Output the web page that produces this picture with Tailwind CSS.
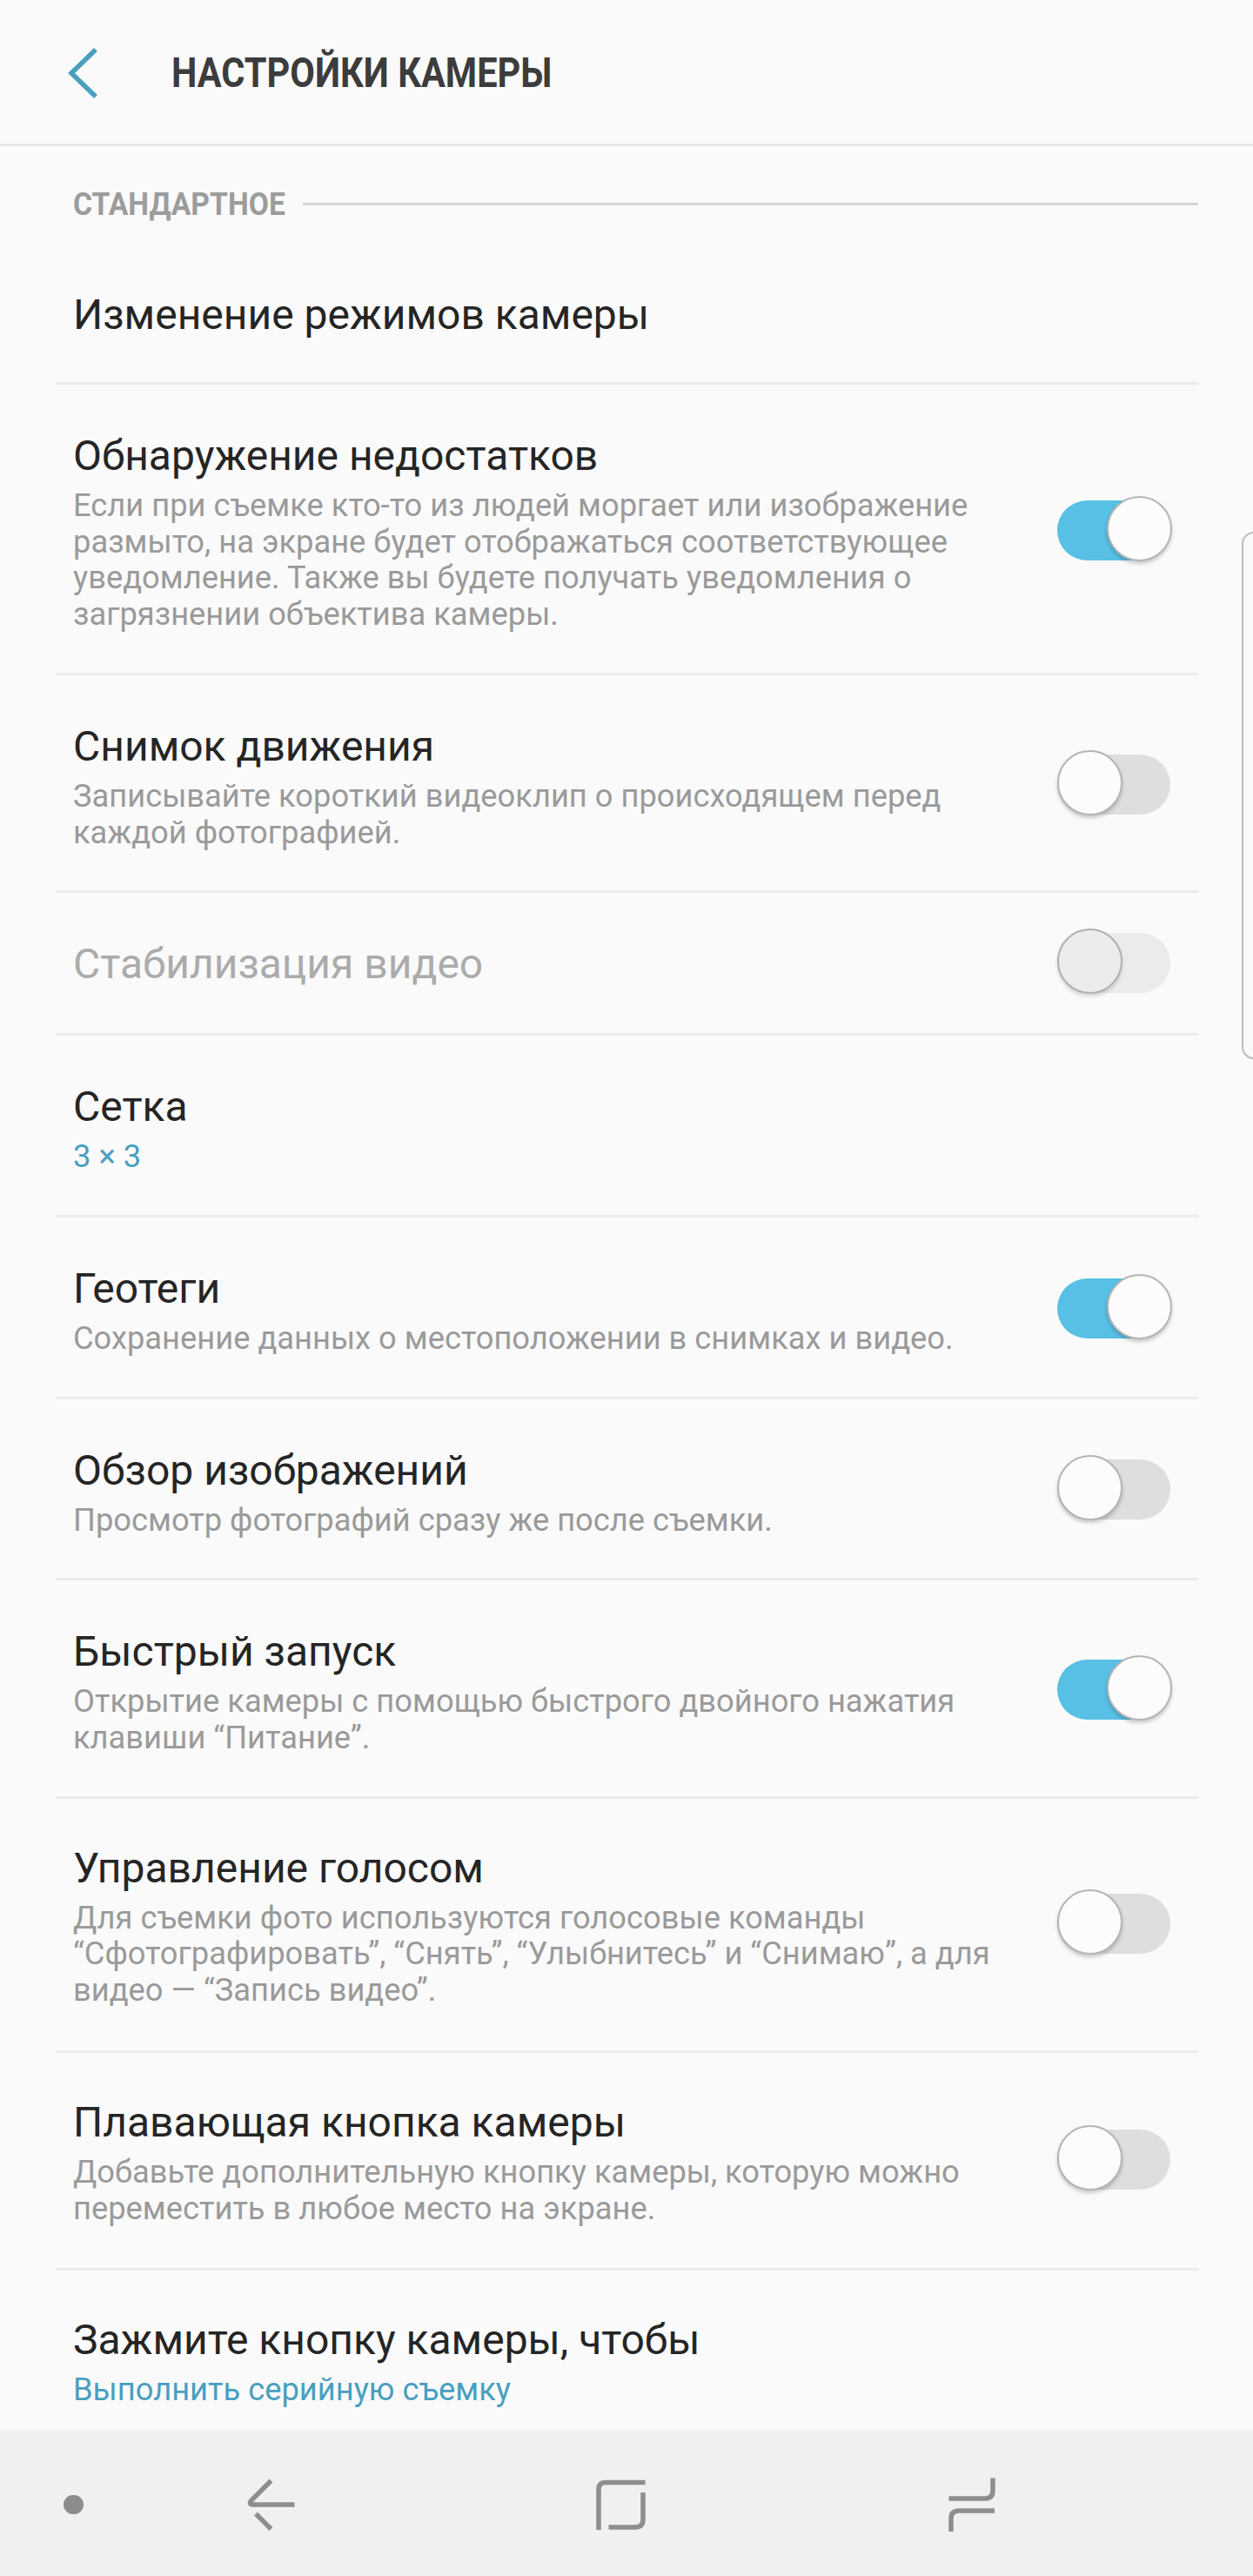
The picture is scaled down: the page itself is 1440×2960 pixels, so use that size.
<!DOCTYPE html>
<html lang="ru">

<head>
  <meta charset="UTF-8">
  <meta name="viewport" content="width=device-width, initial-scale=1.0">
  <script src="https://cdn.jsdelivr.net/npm/@tailwindcss/browser@4"></script>
  <title>Настройки камеры</title>
</head>

<body class="bg-[#fafafa] font-['Roboto',sans-serif]">
  <div class="relative flex h-[2960px] w-[1440px] flex-col overflow-hidden">
    <!-- header -->
    <header class="flex h-[168px] shrink-0 items-center border-b-[3px] border-[#e8e8e8] pt-[2px]">
      <svg class="ml-[72px] h-[64px] w-[48px]" viewBox="0 0 48 64" fill="none" stroke="#4a9fc0" stroke-width="5.5">
        <path d="M38 5 L10 32 L38 59" />
      </svg>
      <h1 class="ml-[77px] origin-left scale-x-[0.865] whitespace-nowrap text-[48px] font-bold leading-none text-[#3c3c3c]">НАСТРОЙКИ КАМЕРЫ</h1>
    </header>

    <!-- settings -->
    <main class="min-h-0 flex-1 overflow-hidden pl-[64px] pr-[63px]">
      <div class="flex h-[125px] items-center pl-[20px] pt-[8px]">
        <span class="w-[264px] shrink-0 origin-left scale-x-[0.91] text-[37px] font-bold leading-none text-[#9c9c9c]">СТАНДАРТНОЕ</span>
        <div class="h-[3px] flex-1 bg-[#d6d6d6]"></div>
      </div>

      <div class="flex h-[149px] items-center border-b-[3px] border-[#ececec] pb-[8px] pl-[20px]">
        <div class="text-[48px] leading-[60px] text-[#252525]">Изменение режимов камеры</div>
      </div>

      <div class="flex items-center border-b-[3px] border-[#ececec] pl-[20px] pr-[32px] pt-[52px] pb-[46px]">
        <div class="flex-1">
          <div class="text-[48px] leading-[60px] text-[#252525]">Обнаружение недостатков</div>
          <div class="mt-[6px] whitespace-nowrap text-[36.3px] leading-[41.7px] text-[#9a9a9a]">Если при съемке кто-то из людей моргает или изображение<br>размыто, на экране будет отображаться соответствующее<br>уведомление. Также вы будете получать уведомления о<br>загрязнении объектива камеры.</div>
        </div>
        <div class="relative mb-[2px] h-[69px] w-[130px] shrink-0 rounded-full bg-[#58bfe5]">
          <div class="absolute -right-[2px] -top-[5px] h-[75px] w-[75px] rounded-full border-2 border-[#b5b5b5] bg-[#fcfcfc] shadow-[0_3px_4px_rgba(0,0,0,0.2)]"></div>
        </div>
      </div>

      <div class="flex items-center border-b-[3px] border-[#ececec] pl-[20px] pr-[32px] pt-[52px] pb-[46px]">
        <div class="flex-1">
          <div class="text-[48px] leading-[60px] text-[#252525]">Снимок движения</div>
          <div class="mt-[6px] whitespace-nowrap text-[36.3px] leading-[41.7px] text-[#9a9a9a]">Записывайте короткий видеоклип о происходящем перед<br>каждой фотографией.</div>
        </div>
        <div class="relative mb-[3px] h-[69px] w-[130px] shrink-0 rounded-full bg-[#dedede]">
          <div class="absolute left-0 -top-[5px] h-[75px] w-[75px] rounded-full border-2 border-[#b5b5b5] bg-[#fcfcfc] shadow-[0_3px_4px_rgba(0,0,0,0.2)]"></div>
        </div>
      </div>

      <div class="flex h-[164px] items-center border-b-[3px] border-[#ececec] pl-[20px] pr-[32px]">
        <div class="flex-1 pt-[3px] text-[48px] leading-[60px] text-[#ababab]">Стабилизация видео</div>
        <div class="relative h-[69px] w-[130px] shrink-0 rounded-full bg-[#ebebeb]">
          <div class="absolute left-0 -top-[5px] h-[75px] w-[75px] rounded-full border-2 border-[#b0b0b0] bg-[#ececec] shadow-[0_3px_4px_rgba(0,0,0,0.15)]"></div>
        </div>
      </div>

      <div class="border-b-[3px] border-[#ececec] pl-[20px] pt-[52px] pb-[46px]">
        <div class="text-[48px] leading-[60px] text-[#252525]">Сетка</div>
        <div class="mt-[6px] text-[36.3px] leading-[41.7px] text-[#4a9fc0]">3 × 3</div>
      </div>

      <div class="flex items-center border-b-[3px] border-[#ececec] pl-[20px] pr-[32px] pt-[52px] pb-[46px]">
        <div class="flex-1">
          <div class="text-[48px] leading-[60px] text-[#252525]">Геотеги</div>
          <div class="mt-[6px] whitespace-nowrap text-[36.3px] leading-[41.7px] text-[#9a9a9a]">Сохранение данных о местоположении в снимках и видео.</div>
        </div>
        <div class="relative mb-[3px] h-[69px] w-[130px] shrink-0 rounded-full bg-[#58bfe5]">
          <div class="absolute -right-[2px] -top-[5px] h-[75px] w-[75px] rounded-full border-2 border-[#b5b5b5] bg-[#fcfcfc] shadow-[0_3px_4px_rgba(0,0,0,0.2)]"></div>
        </div>
      </div>

      <div class="flex items-center border-b-[3px] border-[#ececec] pl-[20px] pr-[32px] pt-[52px] pb-[46px]">
        <div class="flex-1">
          <div class="text-[48px] leading-[60px] text-[#252525]">Обзор изображений</div>
          <div class="mt-[6px] whitespace-nowrap text-[36.3px] leading-[41.7px] text-[#9a9a9a]">Просмотр фотографий сразу же после съемки.</div>
        </div>
        <div class="relative mb-[3px] h-[69px] w-[130px] shrink-0 rounded-full bg-[#dedede]">
          <div class="absolute left-0 -top-[5px] h-[75px] w-[75px] rounded-full border-2 border-[#b5b5b5] bg-[#fcfcfc] shadow-[0_3px_4px_rgba(0,0,0,0.2)]"></div>
        </div>
      </div>

      <div class="flex items-center border-b-[3px] border-[#ececec] pl-[20px] pr-[32px] pt-[52px] pb-[46px]">
        <div class="flex-1">
          <div class="text-[48px] leading-[60px] text-[#252525]">Быстрый запуск</div>
          <div class="mt-[6px] whitespace-nowrap text-[36.3px] leading-[41.7px] text-[#9a9a9a]">Открытие камеры с помощью быстрого двойного нажатия<br>клавиши “Питание”.</div>
        </div>
        <div class="relative mb-[4px] h-[69px] w-[130px] shrink-0 rounded-full bg-[#58bfe5]">
          <div class="absolute -right-[2px] -top-[5px] h-[75px] w-[75px] rounded-full border-2 border-[#b5b5b5] bg-[#fcfcfc] shadow-[0_3px_4px_rgba(0,0,0,0.2)]"></div>
        </div>
      </div>

      <div class="flex items-center border-b-[3px] border-[#ececec] pl-[20px] pr-[32px] pt-[50px] pb-[48px]">
        <div class="flex-1">
          <div class="text-[48px] leading-[60px] text-[#252525]">Управление голосом</div>
          <div class="mt-[6px] whitespace-nowrap text-[36.3px] leading-[41.7px] text-[#9a9a9a]">Для съемки фото используются голосовые команды<br>“Сфотографировать”, “Снять”, “Улыбнитесь” и “Снимаю”, а для<br>видео — “Запись видео”.</div>
        </div>
        <div class="relative mb-[4px] h-[69px] w-[130px] shrink-0 rounded-full bg-[#dedede]">
          <div class="absolute left-0 -top-[5px] h-[75px] w-[75px] rounded-full border-2 border-[#b5b5b5] bg-[#fcfcfc] shadow-[0_3px_4px_rgba(0,0,0,0.2)]"></div>
        </div>
      </div>

      <div class="flex items-center border-b-[3px] border-[#ececec] pl-[20px] pr-[32px] pt-[50px] pb-[48px]">
        <div class="flex-1">
          <div class="text-[48px] leading-[60px] text-[#252525]">Плавающая кнопка камеры</div>
          <div class="mt-[6px] whitespace-nowrap text-[36.3px] leading-[41.7px] text-[#9a9a9a]">Добавьте дополнительную кнопку камеры, которую можно<br>переместить в любое место на экране.</div>
        </div>
        <div class="relative mb-[4px] h-[69px] w-[130px] shrink-0 rounded-full bg-[#dedede]">
          <div class="absolute left-0 -top-[5px] h-[75px] w-[75px] rounded-full border-2 border-[#b5b5b5] bg-[#fcfcfc] shadow-[0_3px_4px_rgba(0,0,0,0.2)]"></div>
        </div>
      </div>

      <div class="pl-[20px] pt-[50px]">
        <div class="text-[48px] leading-[60px] text-[#252525]">Зажмите кнопку камеры, чтобы</div>
        <div class="mt-[6px] text-[36.3px] leading-[41.7px] text-[#4a9fc0]">Выполнить серийную съемку</div>
      </div>
    </main>

    <!-- edge panel handle -->
    <div class="absolute left-[1427px] top-[611px] h-[606px] w-[20px] rounded-l-[14px] border-2 border-r-0 border-[#bdbdbd]"></div>

    <!-- nav bar -->
    <nav class="relative h-[168px] shrink-0 bg-[#f0f0f0]">
      <div class="absolute left-[73px] top-[75px] h-[22px] w-[23px] rounded-full bg-[#8c8c8c]"></div>
      <svg class="absolute left-[250px] top-[38px] h-[100px] w-[120px]" viewBox="0 0 120 100" fill="none" stroke="#8e8e8e" stroke-width="5.5">
        <path d="M61.5 20.5 L39 43 Q35 48 41 48 L88.5 48" />
        <path d="M44 58.5 L61.5 76" />
      </svg>
      <svg class="absolute left-[660px] top-[38px] h-[100px] w-[120px]" viewBox="0 0 120 100" fill="none" stroke="#8e8e8e" stroke-width="5.5">
        <path d="M81.5 22.5 H36 Q28 22.5 28 30.5 V77" />
        <path d="M79 34 V65 Q79 74 70 74 H39.5" />
      </svg>
      <svg class="absolute left-[1060px] top-[38px] h-[100px] w-[120px]" viewBox="0 0 120 100" fill="none" stroke="#8e8e8e" stroke-width="5.5">
        <path d="M81 17.5 V32 Q81 41 72 41 H30.5" />
        <path d="M83 55 H42 Q33 55 33 64 V79" />
      </svg>
    </nav>
  </div>
</body>

</html>
